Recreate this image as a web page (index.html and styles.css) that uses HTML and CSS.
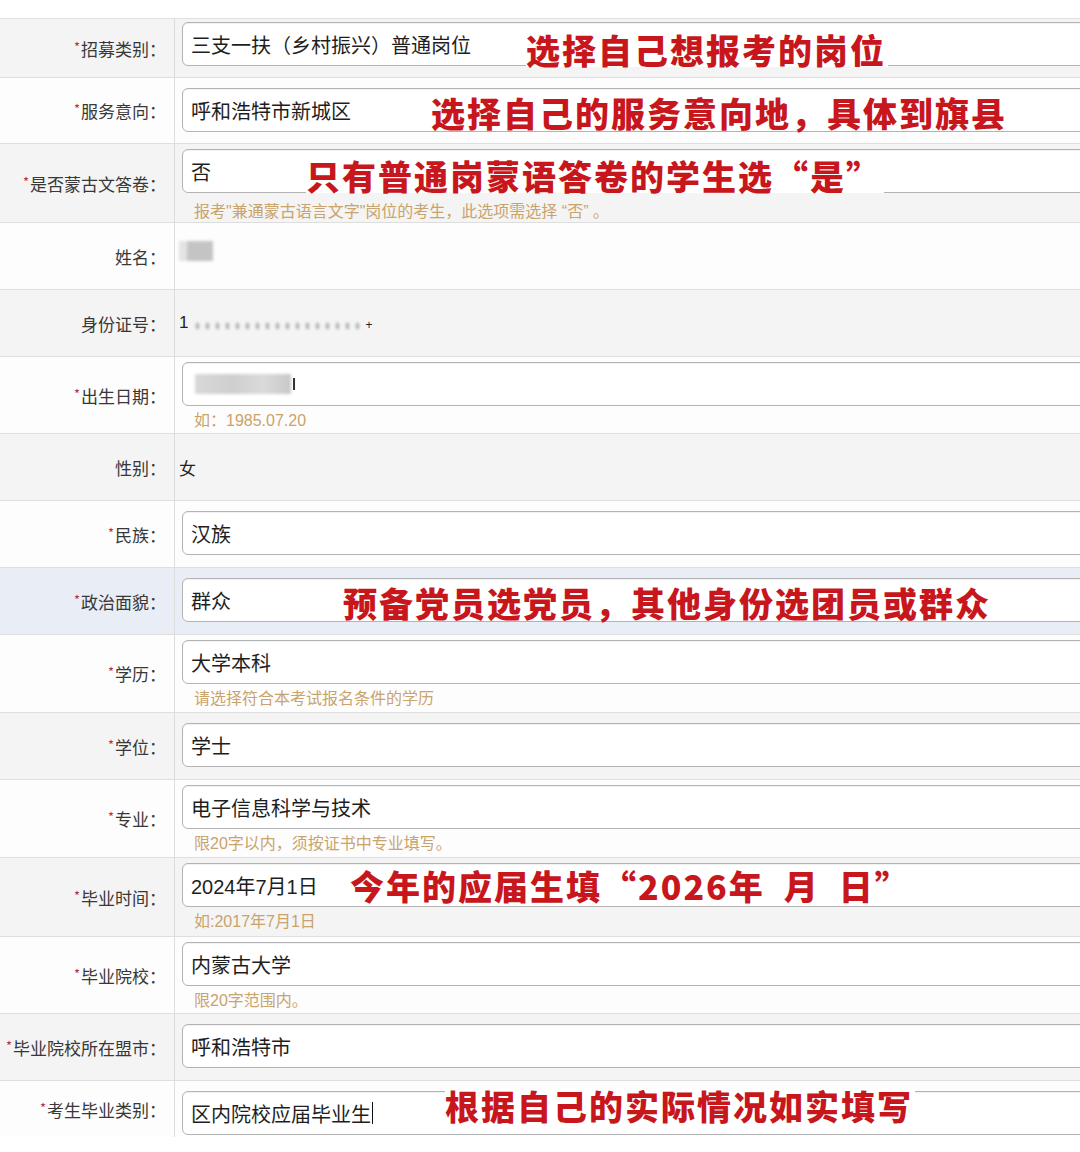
FILE: index.html
```html
<!DOCTYPE html>
<html lang="zh-CN">
<head>
<meta charset="utf-8">
<title>报名信息</title>
<link rel="stylesheet" href="styles.css">
</head>
<body>
<div class="form">
  <div class="row gray r1">
    <div class="label"><span class="req">*</span>招募类别：</div>
    <div class="value"><div class="input">三支一扶（乡村振兴）普通岗位</div></div>
    <div class="note n1">选择自己想报考的岗位</div>
  </div>
  <div class="row h66">
    <div class="label"><span class="req">*</span>服务意向：</div>
    <div class="value"><div class="input">呼和浩特市新城区</div></div>
    <div class="note n2">选择自己的服务意向地，具体到旗县</div>
  </div>
  <div class="row gray h79 r3">
    <div class="label"><span class="req">*</span>是否蒙古文答卷：</div>
    <div class="value hinted"><div class="input">否</div><div class="hint">报考"兼通蒙古语言文字"岗位的考生，此选项需选择 “否” 。</div></div>
    <div class="note n3">只有普通岗蒙语答卷的学生选“是”</div>
  </div>
  <div class="row h67">
    <div class="label">姓名：</div>
    <div class="value plain"><div class="blur name"><span class="b1"></span><span class="b2"></span></div></div>
  </div>
  <div class="row gray h67">
    <div class="label">身份证号：</div>
    <div class="value plain"><div class="idline"><span class="one">1</span><span class="blur dots"></span><span class="plus">+</span></div></div>
  </div>
  <div class="row h77">
    <div class="label"><span class="req">*</span>出生日期：</div>
    <div class="value hinted"><div class="input"><span class="blur birth"></span><span class="tick"></span></div><div class="hint">如：1985.07.20</div></div>
  </div>
  <div class="row gray h67">
    <div class="label">性别：</div>
    <div class="value plain"><div class="text">女</div></div>
  </div>
  <div class="row h67">
    <div class="label"><span class="req">*</span>民族：</div>
    <div class="value"><div class="input">汉族</div></div>
  </div>
  <div class="row blue h67">
    <div class="label"><span class="req">*</span>政治面貌：</div>
    <div class="value"><div class="input">群众</div></div>
    <div class="note n9">预备党员选党员，其他身份选团员或群众</div>
  </div>
  <div class="row h78">
    <div class="label"><span class="req">*</span>学历：</div>
    <div class="value hinted"><div class="input">大学本科</div><div class="hint">请选择符合本考试报名条件的学历</div></div>
  </div>
  <div class="row gray h67">
    <div class="label"><span class="req">*</span>学位：</div>
    <div class="value"><div class="input">学士</div></div>
  </div>
  <div class="row h78">
    <div class="label"><span class="req">*</span>专业：</div>
    <div class="value hinted"><div class="input">电子信息科学与技术</div><div class="hint">限20字以内，须按证书中专业填写。</div></div>
  </div>
  <div class="row gray h79">
    <div class="label"><span class="req">*</span>毕业时间：</div>
    <div class="value hinted"><div class="input">2024年7月1日</div><div class="hint">如:2017年7月1日</div></div>
    <div class="note n13">今年的应届生填“2026年&ensp;月&ensp;日”</div>
  </div>
  <div class="row h77">
    <div class="label"><span class="req">*</span>毕业院校：</div>
    <div class="value hinted"><div class="input">内蒙古大学</div><div class="hint">限20字范围内。</div></div>
  </div>
  <div class="row gray h67">
    <div class="label"><span class="req">*</span>毕业院校所在盟市：</div>
    <div class="value"><div class="input">呼和浩特市</div></div>
  </div>
  <div class="row last">
    <div class="label"><span class="req">*</span>考生毕业类别：</div>
    <div class="value"><div class="input">区内院校应届毕业生<span class="caret"></span></div></div>
    <div class="note n16">根据自己的实际情况如实填写</div>
  </div>
</div>
</body>
</html>
```

FILE: styles.css
```css
html, body {
  margin: 0;
  padding: 0;
  background: #ffffff;
  overflow: hidden;
}
body {
  width: 1080px;
  height: 1152px;
  font-family: "Liberation Sans", "Noto Sans CJK SC", sans-serif;
  color: #333;
}
.form {
  margin-top: 18px;
  border-top: 1px solid #e0e0e0;
}
.row {
  position: relative;
  display: flex;
  box-sizing: border-box;
  height: 67px;
  border-bottom: 1px solid #dedede;
  background: #fdfdfd;
}
.row.gray { background: #f4f4f4; }
.row.blue { background: #e8edf6; }
.r1 { height: 59px; }
.h66 { height: 66px; }
.h67 { height: 67px; }
.h77 { height: 77px; }
.h78 { height: 78px; }
.h79 { height: 79px; }
.row.last {
  height: 56px;
  border-bottom: none;
  overflow: hidden;
}
.label {
  flex: 0 0 175px;
  box-sizing: border-box;
  border-right: 1px solid #dcdcdc;
  display: flex;
  align-items: center;
  justify-content: flex-end;
  padding-right: 8px;
  font-family: "Noto Sans CJK SC", sans-serif;
  font-size: 17px;
  color: #383838;
  white-space: nowrap;
}
.req {
  color: #b8323a;
  font-size: 13px;
  margin-right: 1px;
  position: relative;
  top: -2px;
}
.value {
  flex: 1;
  min-width: 0;
  overflow: hidden;
  box-sizing: border-box;
  padding: 10px 0 0 7px;
}
.r1 .value { padding-top: 3px; }
.value.hinted { padding-top: 5px; }
.last .value { padding-top: 10px; }
.value.plain {
  padding: 0 0 0 4px;
  display: flex;
  align-items: center;
}
.input {
  box-sizing: border-box;
  width: 960px;
  height: 44px;
  border: 1px solid #b3b3b3;
  border-radius: 6px;
  background: #ffffff;
  box-shadow: inset 0 1px 1px rgba(0,0,0,0.06);
  padding-left: 8px;
  display: flex;
  align-items: center;
  font-size: 20px;
  color: #1e1e1e;
  white-space: nowrap;
}
.hint {
  margin-top: 3px;
  padding-left: 12px;
  font-size: 16px;
  line-height: 24px;
  color: #c9a36c;
  white-space: nowrap;
}
.r3 .hint { margin-top: 7px; }
.text {
  font-size: 17px;
  color: #222;
}
.note {
  position: absolute;
  font-family: "Noto Sans CJK SC", sans-serif;
  font-weight: 900;
  font-size: 34px;
  letter-spacing: 2px;
  line-height: 34px;
  color: #c8161d;
  background: #ffffff;
  white-space: nowrap;
  padding-right: 2px;
}
.n1 { left: 526px; top: 14px; }
.n2 { left: 431px; top: 18px; }
.n3 { left: 306px; top: 15px; }
.n9 { left: 343px; top: 18px; }
.n13 { left: 350px; top: 11px; }
.n16 { left: 445px; top: 8px; }
.blur { display: inline-block; filter: blur(1.5px); }
.name { display: flex; margin-top: -10px; }
.name .b1 { width: 8px; height: 20px; background: #e3e3e3; }
.name .b2 { width: 26px; height: 20px; background: #c4c4c4; }
.idline { display: flex; align-items: center; font-size: 17px; color: #222; }
.one { margin-right: 8px; }
.dots {
  width: 168px;
  height: 6px;
  margin-top: 6px;
  background: repeating-linear-gradient(90deg, #8a8a8a 0 3px, transparent 3px 10px);
  opacity: 0.7;
}
.plus { font-size: 12px; margin-left: 1px; margin-top: 4px; }
.birth {
  width: 96px;
  height: 20px;
  margin-left: 4px;
  background: linear-gradient(90deg, #d8d8d8, #cfcfcf 40%, #dadada 70%, #c8c8c8);
}
.tick {
  display: inline-block;
  width: 2px;
  height: 12px;
  background: #333;
  margin-left: 2px;
}
.caret {
  display: inline-block;
  width: 1px;
  height: 22px;
  background: #111;
  margin-left: 1px;
}
```
